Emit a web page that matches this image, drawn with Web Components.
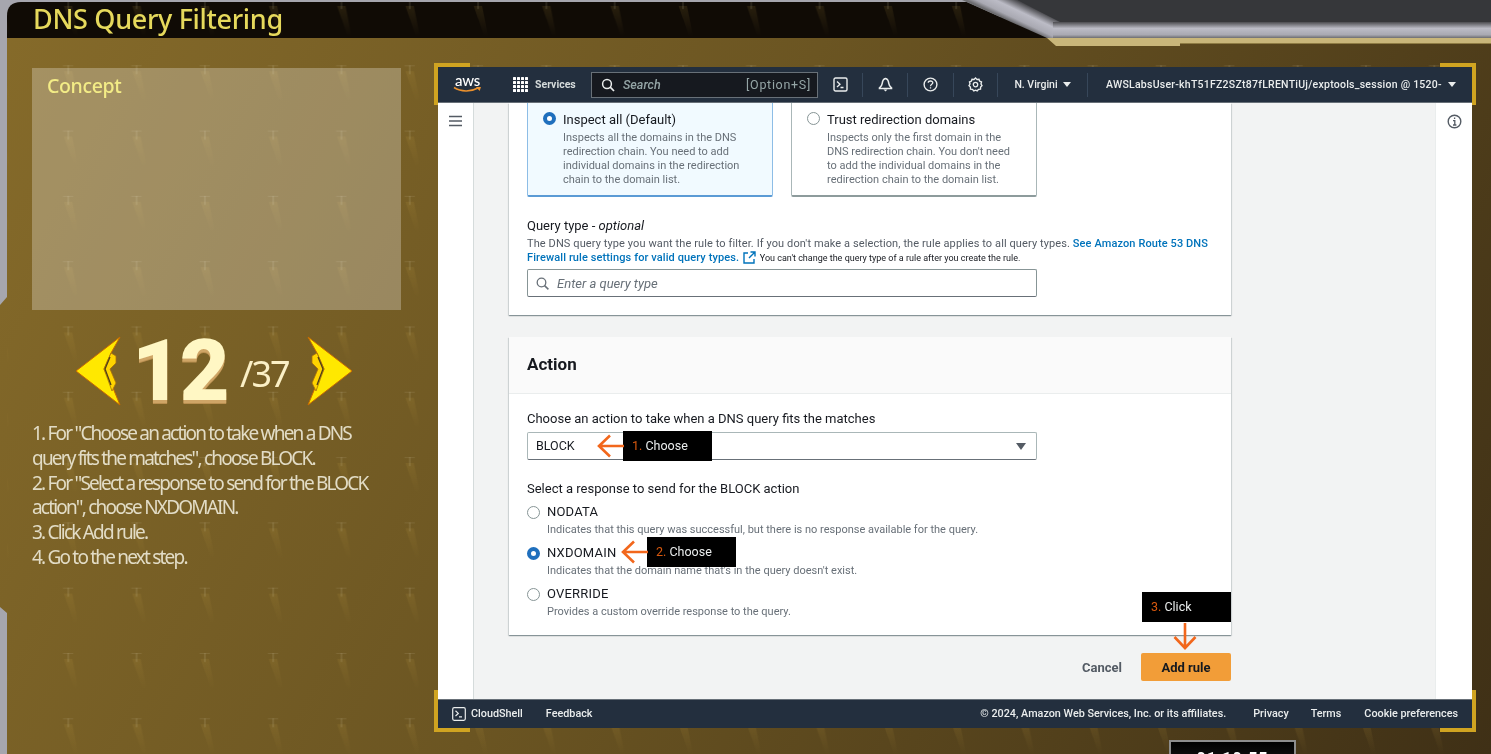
<!DOCTYPE html>
<html>
<head>
<meta charset="utf-8">
<title>DNS Query Filtering</title>
<style>
    html, body { margin: 0; height: 100%; overflow: hidden; background: #36373a; }
</style>
</head>
<body>
<lab-shell>
    <span slot="title">DNS Query Filtering</span>

    <lab-concept slot="left">Concept</lab-concept>
    <lab-step slot="left" current="12" total="37"></lab-step>
    <lab-steps slot="left">
        <div>1. For "Choose an action to take when a DNS query fits the matches", choose BLOCK.</div>
        <div>2. For "Select a response to send for the BLOCK action", choose NXDOMAIN.</div>
        <div>3. Click Add rule.</div>
        <div>4. Go to the next step.</div>
    </lab-steps>

    <aws-console slot="right">
        <aws-card>
            <div class="tiles">
                <aws-tile selected label="Inspect all (Default)">Inspects all the domains in the DNS redirection chain. You need to add individual domains in the redirection chain to the domain list.</aws-tile>
                <aws-tile label="Trust redirection domains">Inspects only the first domain in the DNS redirection chain. You don't need to add the individual domains in the redirection chain to the domain list.</aws-tile>
            </div>
            <query-type></query-type>
        </aws-card>

        <aws-card heading="Action">
            <action-form></action-form>
            <tut-callout dir="left" num="1." style="left:114px;top:94px">Choose</tut-callout>
            <tut-callout dir="left" num="2." style="left:138px;top:200px">Choose</tut-callout>
            <tut-callout dir="down" num="3." style="left:633px;top:255px">Click</tut-callout>
        </aws-card>

        <aws-actions></aws-actions>
    </aws-console>
</lab-shell>

<script>
const UI_FONT = `Roboto, "Liberation Sans", sans-serif`;
const GAME_FONT = `"Noto Sans", "Open Sans", sans-serif`;

class LabShell extends HTMLElement {
    constructor() {
        super();
        this.attachShadow({mode: 'open'});
        this.shadowRoot.innerHTML = `
            <style>
                :host {
                    display: block;
                    position: relative;
                    width: 1491px;
                    height: 754px;
                    overflow: hidden;
                    filter: blur(0.45px);
                }
                #art {
                    position: absolute;
                    left: 0;
                    top: 0;
                    z-index: 0;
                }
                #title {
                    position: relative;
                    height: 38px;
                    padding-left: 33px;
                    font: 500 27px/38px ${GAME_FONT};
                    letter-spacing: -0.32px;
                    color: #e6d95c;
                }
                #body {
                    position: relative;
                    display: flex;
                    gap: 37px;
                    padding: 29px 19px 0 32px;
                }
                #left {
                    width: 369px;
                    padding-top: 1px;
                    display: flex;
                    flex-direction: column;
                }
                #timer {
                    position: absolute;
                    left: 1169px;
                    top: 740px;
                    width: 123px;
                    height: 30px;
                    padding-top: 6px;
                    border: 2px solid #8d8d8d;
                    background: linear-gradient(#000, #222);
                    color: #fff;
                    font: 700 16px/22px ${UI_FONT};
                    letter-spacing: 1px;
                    text-align: center;
                }
            </style>
            <svg id="art" width="1491" height="754" viewBox="0 0 1491 754">
                <defs>
                    <linearGradient id="gold" x1="0" y1="0" x2="1491" y2="754" gradientUnits="userSpaceOnUse">
                        <stop offset="0" stop-color="#866b2a"/>
                        <stop offset="0.45" stop-color="#6b5522"/>
                        <stop offset="1" stop-color="#3f3016"/>
                    </linearGradient>
                    <linearGradient id="bandH" x1="0" y1="22" x2="0" y2="38" gradientUnits="userSpaceOnUse">
                        <stop offset="0" stop-color="#4c4c50"/>
                        <stop offset="0.4" stop-color="#bcbcc6"/>
                        <stop offset="0.8" stop-color="#a9a9b2"/>
                        <stop offset="1" stop-color="#6d6d70"/>
                    </linearGradient>
                    <linearGradient id="bandD" x1="1000" y1="16" x2="1009" y2="-3" gradientUnits="userSpaceOnUse">
                        <stop offset="0" stop-color="#6d6d70"/>
                        <stop offset="0.2" stop-color="#a9a9b2"/>
                        <stop offset="0.6" stop-color="#bcbcc6"/>
                        <stop offset="1" stop-color="#4c4c50"/>
                    </linearGradient>
                    <linearGradient id="streak" x1="0" y1="0" x2="0" y2="1">
                        <stop offset="0" stop-color="#c9a446" stop-opacity="0.13"/>
                        <stop offset="1" stop-color="#c9a446" stop-opacity="0"/>
                    </linearGradient>
                    <pattern id="sparkle" x="0" y="0" width="68.3" height="65.3" patternUnits="userSpaceOnUse">
                        <polygon points="64,6 72,6 78,36 74,36" fill="url(#streak)"/>
                        <polygon points="-4,6 4,6 10,36 6,36" fill="url(#streak)"/>
                        <rect x="67.8" y="0" width="0.5" height="9" fill="#e8e0c0" opacity="0.22"/>
                        <rect x="0" y="0" width="5" height="0.6" fill="#e8e0c0" opacity="0.18"/>
                        <rect x="63" y="0" width="6" height="0.6" fill="#e8e0c0" opacity="0.18"/>
                        <rect x="0" y="0" width="0.5" height="9" fill="#e8e0c0" opacity="0.22"/>
                    </pattern>
                </defs>
                <rect width="1491" height="754" fill="#a6a6ae"/>
                <polygon points="7,38 1491,38 1491,754 7,754 7,613 0,607 0,305 7,297" fill="url(#gold)"/>
                <path d="M7,38 V16 Q7,2 21,2 H967 L1047,38 Z" fill="#100b05"/>
                <rect x="7" y="2" width="1484" height="752" fill="url(#sparkle)"/>
                <rect x="1000" width="491" height="38" fill="#36373a"/>
                <polygon points="1000,0 1000,38 1047,38" fill="#100b05"/>
                <polygon points="962,0 1017,0 1060,22 1060,38 1047,38" fill="url(#bandD)"/>
                <rect x="1053" y="22" width="438" height="16" fill="url(#bandH)"/>
                <polygon points="1047,38 1491,38 1491,43 1180,43 1180,46 1056,46" fill="#c9b67a"/>
                <polygon points="1180,43 1491,43 1491,44 1180,44" fill="#8f7c44"/>
            </svg>
            <div id="title"><slot name="title"></slot></div>
            <div id="body">
                <div id="left"><slot name="left"></slot></div>
                <slot name="right"></slot>
            </div>
            <div id="timer">01:10:55</div>
        `;
    }
}

class LabConcept extends HTMLElement {
    constructor() {
        super();
        this.attachShadow({mode: 'open'});
        this.shadowRoot.innerHTML = `
            <style>
                :host {
                    display: block;
                    height: 242px;
                    box-sizing: border-box;
                    padding: 4px 15px;
                    background: rgba(255, 255, 255, 0.27);
                    font: 500 19.5px/28px ${GAME_FONT};
                    letter-spacing: -0.35px;
                    color: #f3ec86;
                }
            </style>
            <slot></slot>
        `;
    }
}

class LabStep extends HTMLElement {
    constructor() {
        super();
        this.attachShadow({mode: 'open'});
        const arrow = `
            <svg width="46" height="70" viewBox="0 0 46 70">
                <polygon points="1,35 45,1 36,17 29,33 38,52 45,69" fill="#ffe800" stroke="#c96a00" stroke-width="1"/>
                <polygon points="36,17 41,20 41,27 35,33 41,47 37,55 29,33" fill="#ffd400" stroke="#a8700a" stroke-width="0.8"/>
                <polyline points="35,21 30,33 36,49" fill="none" stroke="#4d3f18" stroke-width="1.3"/>
            </svg>`;
        this.shadowRoot.innerHTML = `
            <style>
                :host {
                    display: flex;
                    align-items: center;
                    height: 110px;
                    box-sizing: border-box;
                    padding: 12px 0 0 43px;
                }
                #next { transform: scaleX(-1); margin-left: 15px; line-height: 0; }
                #cur {
                    margin-left: 11px;
                    width: 97px;
                    font: 900 86px/90px Roboto, sans-serif;
                    letter-spacing: -2px;
                    color: #fff7c4;
                    text-shadow: 0 3px 0 #cfa566, 0 4px 0 #b98f50;
                }
                #total {
                    margin: 6px 0 0 11px;
                    width: 52px;
                    font: 400 36px/44px ${GAME_FONT};
                    letter-spacing: -2px;
                    color: #fbf0c6;
                    white-space: nowrap;
                }
            </style>
            ${arrow}
            <span id="cur">${this.getAttribute('current')}</span>
            <span id="total">/${this.getAttribute('total')}</span>
            <span id="next">${arrow}</span>
        `;
    }
}

class LabSteps extends HTMLElement {
    constructor() {
        super();
        this.attachShadow({mode: 'open'});
        this.shadowRoot.innerHTML = `
            <style>
                :host {
                    display: block;
                    width: 345px;
                    margin-top: 1px;
                    font: 400 19px/24.8px ${GAME_FONT};
                    letter-spacing: -1.8px;
                    color: #e2dcc6;
                }
            </style>
            <slot></slot>
        `;
    }
}

class AwsConsole extends HTMLElement {
    constructor() {
        super();
        this.attachShadow({mode: 'open'});
        this.shadowRoot.innerHTML = `
            <style>
                :host {
                    display: flex;
                    flex-direction: column;
                    position: relative;
                    width: 1034px;
                    height: 661px;
                    background: #fff;
                    font-family: ${UI_FONT};
                }
                .corner {
                    position: absolute;
                    width: 32px;
                    height: 38px;
                    border: 4px solid #d0a421;
                }
                .tl { left: -4px; top: -4px; border-right: 0; border-bottom: 0; }
                .tr { right: -4px; top: -4px; border-left: 0; border-bottom: 0; }
                .bl { left: -4px; bottom: -4px; border-right: 0; border-top: 0; }
                .br { right: -4px; bottom: -4px; border-left: 0; border-top: 0; }
                #middle {
                    flex: 1;
                    min-height: 0;
                    display: flex;
                }
                #rail-l {
                    width: 36px;
                    flex: none;
                    box-sizing: border-box;
                    border-right: 1px solid #d5dbdb;
                    padding: 12px 0 0 11px;
                }
                #rail-r {
                    width: 37px;
                    flex: none;
                    box-sizing: border-box;
                    border-left: 1px solid #eaeded;
                    padding: 11px 0 0 11px;
                }
                #main {
                    flex: 1;
                    min-width: 0;
                    background: #f2f3f3;
                    padding: 0 204px 0 35px;
                    display: flex;
                    flex-direction: column;
                    gap: 22px;
                }
                svg { display: block; }
            </style>
            <span class="corner tl"></span><span class="corner tr"></span>
            <span class="corner bl"></span><span class="corner br"></span>
            <aws-topnav></aws-topnav>
            <div id="middle">
                <div id="rail-l">
                    <svg width="13" height="12" viewBox="0 0 13 12">
                        <path d="M0 1.5H13M0 6H13M0 10.5H13" stroke="#545b64" stroke-width="1.4"/>
                    </svg>
                </div>
                <div id="main"><slot></slot></div>
                <div id="rail-r">
                    <svg width="15" height="15" viewBox="0 0 15 15">
                        <circle cx="7.5" cy="7.5" r="6.3" fill="none" stroke="#545b64" stroke-width="1.4"/>
                        <path d="M6 6.7H7.8V11M6 11H9.4M7.6 3.6V5" fill="none" stroke="#545b64" stroke-width="1.3"/>
                    </svg>
                </div>
            </div>
            <aws-footer></aws-footer>
        `;
    }
}

class AwsTopnav extends HTMLElement {
    constructor() {
        super();
        this.attachShadow({mode: 'open'});
        const tile = [];
        for (let r = 0; r < 4; r++) {
            for (let c = 0; c < 4; c++) {
                tile.push(`<rect x="${c * 4}" y="${r * 4}" width="3" height="3" rx="0.5" fill="#fff"/>`);
            }
        }
        this.shadowRoot.innerHTML = `
            <style>
                :host {
                    display: flex;
                    align-items: center;
                    flex: none;
                    height: 36px;
                    box-sizing: border-box;
                    background: #232f3e;
                    border-bottom: 1px solid #687078;
                    color: #eaeded;
                    font: 500 10.5px/14px ${UI_FONT};
                    white-space: nowrap;
                }
                svg { display: block; flex: none; }
                #logo {
                    margin-left: 15px;
                    width: 29px;
                    position: relative;
                    height: 24px;
                }
                #logo span {
                    display: block;
                    font: 500 15px/14px Lato, sans-serif;
                    text-align: center;
                    letter-spacing: -0.2px;
                    color: #fff;
                }
                #logo svg { margin-top: -1px; }
                #grid { margin-left: 31px; }
                #services { margin-left: 7px; width: 56px; font-weight: 700; color: #d5dbdb; }
                #search {
                    width: 227px;
                    height: 26px;
                    box-sizing: border-box;
                    display: flex;
                    align-items: center;
                    padding: 0 6px 0 9px;
                    background: #16191f;
                    border: 1px solid #687078;
                    color: #95a5a6;
                    font-size: 12.5px;
                }
                #search i { margin-left: 8px; flex: 1; }
                #search b { font-weight: 400; font-size: 12.5px; letter-spacing: 0.7px; }
                .cell {
                    display: flex;
                    align-items: center;
                    justify-content: center;
                    height: 24px;
                    border-right: 1px solid #37475a;
                    box-sizing: border-box;
                }
                #shell { width: 45px; }
                #bell { width: 45px; }
                #help { width: 46px; }
                #gear { width: 44px; }
                #region { width: 90px; gap: 5px; font-weight: 500; }
                #account { border: 0; margin-left: 18px; gap: 6px; letter-spacing: 0.25px; }
                .caret { width: 0; height: 0; border: 4px solid transparent; border-top: 5px solid #eaeded; border-bottom: 0; }
            </style>
            <div id="logo">
                <span>aws</span>
                <svg width="29" height="7" viewBox="0 0 29 7">
                    <path d="M1 1.5C8 6 18 6 25 2" fill="none" stroke="#ec912d" stroke-width="1.5"/>
                    <path d="M23 1H28L26.6 5Z" fill="#ec912d"/>
                </svg>
            </div>
            <svg id="grid" width="15" height="15" viewBox="0 0 15 15">${tile.join('')}</svg>
            <span id="services">Services</span>
            <div id="search">
                <svg width="14" height="14" viewBox="0 0 14 14">
                    <circle cx="6" cy="6" r="4.4" fill="none" stroke="#eaeded" stroke-width="1.5"/>
                    <path d="M9.2 9.2L13 13" stroke="#eaeded" stroke-width="1.7"/>
                </svg>
                <i>Search</i>
                <b>[Option+S]</b>
            </div>
            <div class="cell" id="shell">
                <svg width="15" height="15" viewBox="0 0 15 15">
                    <rect x="1" y="1" width="13" height="13" rx="1.5" fill="none" stroke="#eaeded" stroke-width="1.4"/>
                    <path d="M4 4.5L7 7.2L4 10M7.5 10.5H10.5" fill="none" stroke="#eaeded" stroke-width="1.3"/>
                </svg>
            </div>
            <div class="cell" id="bell">
                <svg width="15" height="15" viewBox="0 0 15 15">
                    <path d="M7.5 1.5C5 2 4.5 4 4.2 6.5C4 8.5 2.8 9.5 1.5 10.8V11.5H13.5V10.8C12.2 9.5 11 8.5 10.8 6.5C10.5 4 10 2 7.5 1.5Z" fill="none" stroke="#eaeded" stroke-width="1.6"/>
                    <path d="M5.5 12.5H9.5L7.5 14.5Z" fill="#eaeded"/>
                </svg>
            </div>
            <div class="cell" id="help">
                <svg width="15" height="15" viewBox="0 0 15 15">
                    <circle cx="7.5" cy="7.5" r="6.4" fill="none" stroke="#eaeded" stroke-width="1.4"/>
                    <path d="M5.2 5.8C5.4 3.4 9.8 3.4 9.8 5.8C9.8 7.4 7.5 7.3 7.5 9.2M7.5 10.2V11.6" fill="none" stroke="#eaeded" stroke-width="1.3"/>
                </svg>
            </div>
            <div class="cell" id="gear">
                <svg width="15" height="15" viewBox="0 0 15 15">
                    <path d="M7.5 1L9 2.4L11 2.2L11.6 4.1L13.5 5L13 7L14 8.7L12.6 10.1L12.5 12.1L10.5 12.4L9.2 14L7.5 13.2L5.8 14L4.5 12.4L2.5 12.1L2.4 10.1L1 8.7L2 7L1.5 5L3.4 4.1L4 2.2L6 2.4Z" fill="none" stroke="#eaeded" stroke-width="1.4"/>
                    <circle cx="7.5" cy="7.6" r="2.2" fill="none" stroke="#eaeded" stroke-width="1.3"/>
                </svg>
            </div>
            <div class="cell" id="region">N. Virgini <span class="caret"></span></div>
            <div class="cell" id="account">AWSLabsUser-khT51FZ2SZt87fLRENTiUj/exptools_session @ 1520- <span class="caret"></span></div>
        `;
    }
}

class AwsFooter extends HTMLElement {
    constructor() {
        super();
        this.attachShadow({mode: 'open'});
        this.shadowRoot.innerHTML = `
            <style>
                :host {
                    display: flex;
                    align-items: center;
                    flex: none;
                    height: 29px;
                    box-sizing: border-box;
                    padding: 0 14px;
                    background: #232f3e;
                    border-top: 1px solid #687078;
                    color: #eaeded;
                    font: 500 10.8px/14px ${UI_FONT};
                    white-space: nowrap;
                }
                svg { display: block; }
                #shell { margin-left: 5px; }
                #feedback { margin-left: 23px; }
                #copy { margin-left: auto; }
                .link { margin-left: 27px; }
                #terms { margin-left: 22px; }
                #prefs { margin-left: 23px; }
            </style>
            <svg width="14" height="14" viewBox="0 0 14 14">
                <rect x="0.7" y="0.7" width="12.6" height="12.6" rx="1.5" fill="none" stroke="#eaeded" stroke-width="1.2"/>
                <path d="M3.5 3.8L6.3 6.4L3.5 9M7 9.8H10" fill="none" stroke="#eaeded" stroke-width="1.2"/>
            </svg>
            <span id="shell">CloudShell</span>
            <span id="feedback">Feedback</span>
            <span id="copy">© 2024, Amazon Web Services, Inc. or its affiliates.</span>
            <span class="link">Privacy</span>
            <span class="link" id="terms">Terms</span>
            <span class="link" id="prefs">Cookie preferences</span>
        `;
    }
}

class AwsCard extends HTMLElement {
    constructor() {
        super();
        this.attachShadow({mode: 'open'});
        const heading = this.getAttribute('heading');
        this.shadowRoot.innerHTML = `
            <style>
                :host {
                    display: block;
                    position: relative;
                    background: #fff;
                    box-shadow: 0 1px 1px 0 rgba(0, 28, 36, 0.3), 1px 1px 1px 0 rgba(0, 28, 36, 0.1), -1px 1px 1px 0 rgba(0, 28, 36, 0.1);
                }
                header {
                    height: 57px;
                    box-sizing: border-box;
                    padding: 0 18px;
                    background: #fafafa;
                    border-bottom: 1px solid #eaeded;
                    font: 700 17px/55px ${UI_FONT};
                    color: #16191f;
                }
                #content { padding: 0 18px; }
                ::slotted(.tiles) { display: flex; gap: 18px; }
            </style>
            ${heading ? `<header>${heading}</header>` : ''}
            <div id="content"><slot></slot></div>
        `;
    }
}

class AwsRadio extends HTMLElement {
    constructor() {
        super();
        this.attachShadow({mode: 'open'});
        this.shadowRoot.innerHTML = `
            <style>
                :host {
                    display: block;
                    width: 13px;
                    height: 13px;
                    flex: none;
                    box-sizing: border-box;
                    border-radius: 50%;
                    border: 1.5px solid #879596;
                    background: #fff;
                }
                :host([selected]) {
                    border: 4px solid #1f6fbd;
                }
            </style>
        `;
    }
}

class AwsTile extends HTMLElement {
    constructor() {
        super();
        this.attachShadow({mode: 'open'});
        this.shadowRoot.innerHTML = `
            <style>
                :host {
                    display: flex;
                    gap: 7px;
                    width: 246px;
                    height: 94px;
                    box-sizing: border-box;
                    padding: 9px 15px 0 15px;
                    background: #fff;
                    border: 1px solid #aab7b8;
                    border-top: 0;
                    border-bottom: 2px solid #8d9b9c;
                    border-radius: 0 0 2px 2px;
                }
                :host([selected]) {
                    background: #f1faff;
                    border-color: #8dbde6;
                    border-bottom-color: #5b9bd5;
                }
                b {
                    display: block;
                    font: 400 13px/16px ${UI_FONT};
                    color: #16191f;
                }
                p {
                    margin: 2.6px 0 0;
                    font: 400 11px/14.3px ${UI_FONT};
                    color: #687078;
                }
            </style>
            <aws-radio ${this.hasAttribute('selected') ? 'selected' : ''}></aws-radio>
            <div>
                <b>${this.getAttribute('label')}</b>
                <p><slot></slot></p>
            </div>
        `;
    }
}

class QueryType extends HTMLElement {
    constructor() {
        super();
        this.attachShadow({mode: 'open'});
        this.shadowRoot.innerHTML = `
            <style>
                :host {
                    display: block;
                    padding: 21px 0 18px;
                    color: #16191f;
                    font-family: ${UI_FONT};
                }
                #label { font-size: 13px; line-height: 16px; }
                #desc { margin-top: 3px; font-size: 11px; line-height: 14px; letter-spacing: 0.1px; color: #545b64; white-space: nowrap; }
                #desc a { color: #0073bb; font-weight: 500; }
                #desc svg { vertical-align: top; margin: 0 1px; }
                #desc small { font-size: 9px; letter-spacing: 0; color: #16191f; }
                #input {
                    display: flex;
                    align-items: center;
                    gap: 8px;
                    width: 510px;
                    height: 28px;
                    box-sizing: border-box;
                    margin-top: 4px;
                    padding: 0 8px;
                    border: 1px solid #879596;
                    border-bottom-color: #687078;
                    border-radius: 2px;
                    font-size: 13px;
                    font-style: italic;
                    color: #687078;
                }
            </style>
            <div id="label">Query type - <i>optional</i></div>
            <div id="desc">
                <div>The DNS query type you want the rule to filter. If you don't make a selection, the rule applies to all query types. <a>See Amazon Route 53 DNS</a></div>
                <div><a>Firewall rule settings for valid query types.</a>
                    <svg width="13" height="13" viewBox="0 0 13 13">
                        <path d="M5 2H1V12H11V8M7.5 1H12V5.5M12 1L6 7" fill="none" stroke="#0073bb" stroke-width="1.4"/>
                    </svg>
                    <small>You can't change the query type of a rule after you create the rule.</small>
                </div>
            </div>
            <div id="input">
                <svg width="13" height="13" viewBox="0 0 13 13">
                    <circle cx="5.5" cy="5.5" r="4.3" fill="none" stroke="#687078" stroke-width="1.3"/>
                    <path d="M8.6 8.6L12.4 12.4" stroke="#687078" stroke-width="1.5"/>
                </svg>
                Enter a query type
            </div>
        `;
    }
}

class ActionForm extends HTMLElement {
    constructor() {
        super();
        this.attachShadow({mode: 'open'});
        const rows = [
            ['NODATA', 'Indicates that this query was successful, but there is no response available for the query.', false],
            ['NXDOMAIN', "Indicates that the domain name that's in the query doesn't exist.", true],
            ['OVERRIDE', 'Provides a custom override response to the query.', false]
        ];
        this.shadowRoot.innerHTML = `
            <style>
                :host {
                    display: block;
                    padding: 17px 0 8px;
                    color: #16191f;
                    font: 400 13px/16px ${UI_FONT};
                }
                #select {
                    display: flex;
                    align-items: center;
                    justify-content: space-between;
                    width: 510px;
                    height: 28px;
                    box-sizing: border-box;
                    margin: 5px 0 21px;
                    padding: 0 10px 0 8px;
                    border: 1px solid #aab7b8;
                    border-bottom-color: #687078;
                    border-radius: 2px;
                    font-size: 12.5px;
                }
                #caret { width: 0; height: 0; border: 5px solid transparent; border-top: 7px solid #545b64; border-bottom: 0; }
                .row {
                    display: grid;
                    grid-template-columns: 13px 1fr;
                    column-gap: 7px;
                    align-items: center;
                    height: 41px;
                    align-content: start;
                }
                #rows { margin-top: 7px; }
                .row span { font-size: 13px; line-height: 16px; letter-spacing: 0.2px; }
                .row p {
                    grid-column: 2;
                    margin: 3px 0 0;
                    font-size: 11px;
                    line-height: 14px;
                    color: #687078;
                }
            </style>
            <div>Choose an action to take when a DNS query fits the matches</div>
            <div id="select">BLOCK<span id="caret"></span></div>
            <div>Select a response to send for the BLOCK action</div>
            <div id="rows">
                ${rows.map(r => `
                    <div class="row">
                        <aws-radio ${r[2] ? 'selected' : ''}></aws-radio>
                        <span>${r[0]}</span>
                        <p>${r[1]}</p>
                    </div>`).join('')}
            </div>
        `;
    }
}

class AwsActions extends HTMLElement {
    constructor() {
        super();
        this.attachShadow({mode: 'open'});
        this.shadowRoot.innerHTML = `
            <style>
                :host {
                    display: flex;
                    align-items: center;
                    justify-content: flex-end;
                    gap: 19px;
                    margin-top: -4px;
                    font: 700 13px/16px ${UI_FONT};
                }
                #cancel { color: #545b64; margin-top: 2px; }
                #add {
                    width: 90px;
                    height: 28px;
                    border-radius: 2px;
                    background: #f29d38;
                    color: #16191f;
                    line-height: 29px;
                    text-align: center;
                }
            </style>
            <span id="cancel">Cancel</span>
            <span id="add">Add rule</span>
        `;
    }
}

// the orange tutorial tags that sit over the console
class TutCallout extends HTMLElement {
    constructor() {
        super();
        this.attachShadow({mode: 'open'});
        const dir = this.getAttribute('dir');
        const arrow = dir === 'down'
            ? `<svg id="arrow" width="30" height="28" viewBox="0 0 30 28">
                   <path d="M15 0V25M4.5 14L15 25L25.5 14" fill="none" stroke="#f2671c" stroke-width="2.6"/>
               </svg>`
            : `<svg id="arrow" width="28" height="30" viewBox="0 0 28 30">
                   <path d="M28 15H3M14 4.5L3 15L14 25.5" fill="none" stroke="#f2671c" stroke-width="2.6"/>
               </svg>`;
        this.shadowRoot.innerHTML = `
            <style>
                :host {
                    position: absolute;
                    display: block;
                    width: 89px;
                    height: 30px;
                    box-sizing: border-box;
                    padding-left: 9px;
                    background: #000;
                    color: #eaeded;
                    font: 400 12.5px/30px ${UI_FONT};
                }
                b { font-weight: 400; color: #d9590e; }
                #arrow { position: absolute; }
                :host([dir=left]) #arrow { left: -27px; top: 0; }
                :host([dir=down]) #arrow { left: 28px; top: 31px; }
            </style>
            <b>${this.getAttribute('num')}</b> <slot></slot>
            ${arrow}
        `;
    }
}

customElements.define('aws-radio', AwsRadio);
customElements.define('lab-shell', LabShell);
customElements.define('lab-concept', LabConcept);
customElements.define('lab-step', LabStep);
customElements.define('lab-steps', LabSteps);
customElements.define('aws-console', AwsConsole);
customElements.define('aws-topnav', AwsTopnav);
customElements.define('aws-footer', AwsFooter);
customElements.define('aws-card', AwsCard);
customElements.define('aws-tile', AwsTile);
customElements.define('query-type', QueryType);
customElements.define('action-form', ActionForm);
customElements.define('aws-actions', AwsActions);
customElements.define('tut-callout', TutCallout);
</script>
</body>
</html>
